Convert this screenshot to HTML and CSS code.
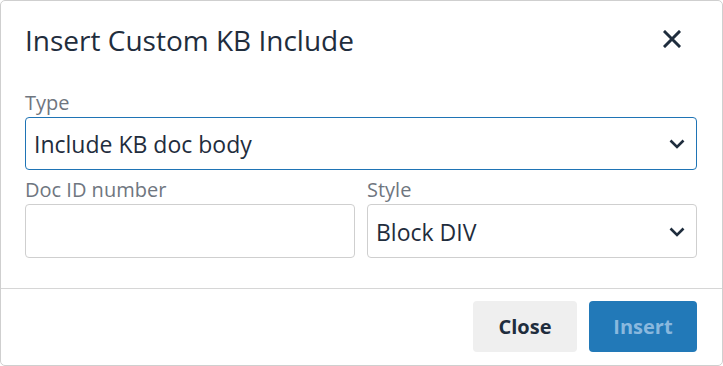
FILE: index.html
```html
<!DOCTYPE html>
<html>
<head>
<meta charset="utf-8">
<link rel="stylesheet" href="styles.css">
</head>
<body>
<div class="dialog">
  <div class="header">
    <h1 class="title">Insert Custom KB Include</h1>
    <svg class="close-x" width="18" height="18" viewBox="0 0 18 18"><path d="M2 2L16 16M16 2L2 16" stroke="#1f2d3d" stroke-width="3" stroke-linecap="square" fill="none"/></svg>
  </div>
  <div class="body">
    <div class="label">Type</div>
    <div class="select focused">
      <span class="select-text">Include KB doc body</span>
      <svg class="chev" width="16" height="10" viewBox="0 0 16 10"><path d="M1.5 1.5L8 8L14.5 1.5" stroke="#1f2d3d" stroke-width="2.6" fill="none"/></svg>
    </div>
    <div class="row">
      <div class="field">
        <div class="label">Doc ID number</div>
        <div class="input"></div>
      </div>
      <div class="field">
        <div class="label">Style</div>
        <div class="select">
          <span class="select-text">Block DIV</span>
          <svg class="chev" width="16" height="10" viewBox="0 0 16 10"><path d="M1.5 1.5L8 8L14.5 1.5" stroke="#1f2d3d" stroke-width="2.6" fill="none"/></svg>
        </div>
      </div>
    </div>
  </div>
  <div class="footer">
    <div class="btn btn-close">Close</div>
    <div class="btn btn-insert">Insert</div>
  </div>
</div>
</body>
</html>
```
FILE: styles.css
```css
* { box-sizing: border-box; }
html, body { margin: 0; padding: 0; background: #fff; }
body { font-family: "Open Sans", "Noto Sans", sans-serif; color: #1f2d3d; }

.dialog {
  width: 723px;
  height: 366px;
  border: 1px solid #cfcfcf;
  border-radius: 5px;
  display: flex;
  flex-direction: column;
  background: #fff;
}

.header {
  display: flex;
  justify-content: space-between;
  align-items: flex-start;
  padding: 21px 41px 0 24px;
}
.title {
  margin: 0;
  font-size: 28px;
  font-weight: 400;
  line-height: 36px;
  color: #1f2d3d;
}
.close-x { margin-top: 8px; display: block; }

.body {
  padding: 33px 25px 30px 24px;
  border-bottom: 1px solid #d6d6d6;
}
.label {
  font-size: 20px;
  line-height: 24px;
  color: #6f7680;
  margin-bottom: 2px;
}
.select, .input {
  height: 53px;
  border: 1px solid #cfcfcf;
  border-radius: 4px;
  display: flex;
  align-items: center;
  justify-content: space-between;
  padding: 1px 11px 0 8px;
}
.select.focused { border-color: #1f74b5; }
.select-text { font-size: 23px; line-height: 30px; color: #1f2d3d; }
.chev { display: block; }

.row {
  margin-top: 8px;
  display: grid;
  grid-template-columns: 1fr 1fr;
  column-gap: 12px;
}
.row .input, .row .select { height: 54px; }

.footer {
  display: flex;
  justify-content: flex-end;
  gap: 12px;
  padding: 12px 25px 12px 24px;
}
.btn {
  height: 51px;
  border-radius: 4px;
  font-size: 20px;
  font-weight: 700;
  display: flex;
  align-items: center;
  justify-content: center;
}
.btn-close { width: 104px; background: #efefef; color: #1f2d3d; }
.btn-insert { width: 108px; background: #2279b8; color: #8ab8de; }
```
